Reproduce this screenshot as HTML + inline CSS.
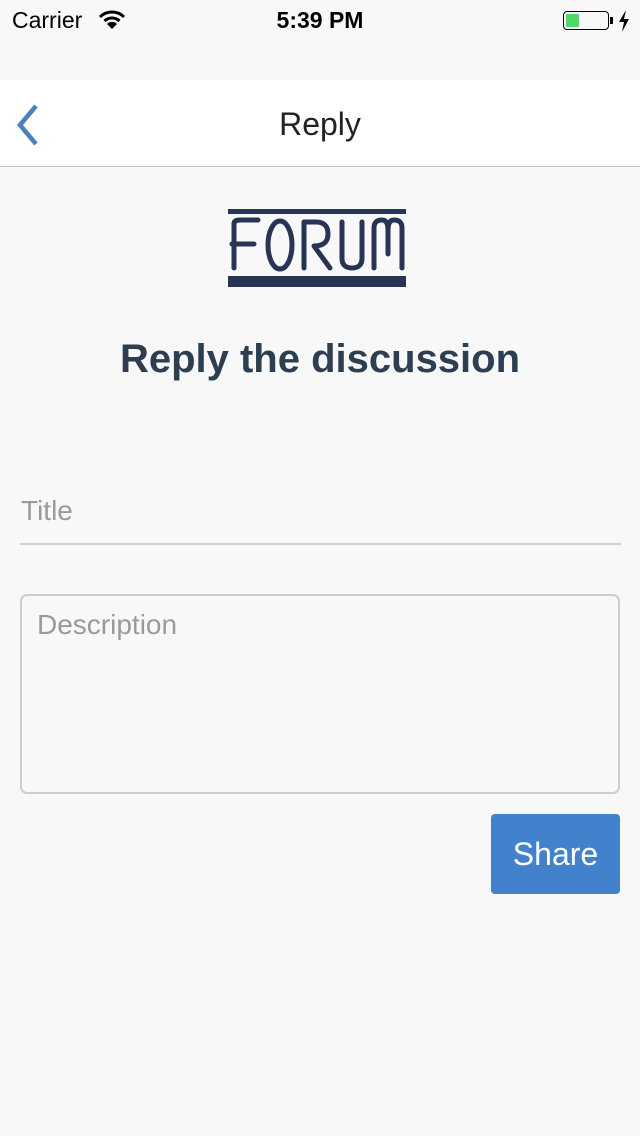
<!DOCTYPE html>
<html><head><meta charset="utf-8"><style>
*{margin:0;padding:0;box-sizing:border-box}
body{width:640px;height:1136px;background:#f8f8f8;font-family:"Liberation Sans",sans-serif;position:relative;overflow:hidden}
.abs{position:absolute}
</style></head><body>
<div class="abs" style="left:12px;top:7px;font-size:23px;color:#000">Carrier</div>
<svg class="abs" style="left:98px;top:10px" width="28" height="20" viewBox="0 0 28 20"><path d="M2 7 A17 17 0 0 1 26 7" stroke="#000" stroke-width="3" fill="none"/><path d="M6.5 11 A11 11 0 0 1 21.5 11" stroke="#000" stroke-width="3" fill="none"/><path d="M14 19 L9 14 A7 7 0 0 1 19 14 Z" fill="#000"/></svg>
<div class="abs" style="left:0;width:640px;text-align:center;top:7px;font-size:23px;font-weight:bold;color:#000">5:39 PM</div>
<div class="abs" style="left:563px;top:11px;width:46px;height:19px;border:1.5px solid #000;border-radius:4px"></div>
<div class="abs" style="left:566px;top:14px;width:13px;height:13px;background:#4cd964;border-radius:1px"></div>
<div class="abs" style="left:610px;top:17px;width:3px;height:7px;background:#000"></div>
<svg class="abs" style="left:618px;top:10px" width="12" height="22" viewBox="0 0 12 22"><path d="M8 0 L1 12 H6 L4 22 L11 9 H6 Z" fill="#000"/></svg>
<div class="abs" style="left:0;top:80px;width:640px;height:87px;background:#fff;border-bottom:1.5px solid #c8c8c8"></div>
<svg class="abs" style="left:12px;top:104px" width="30" height="42" viewBox="0 0 30 42"><path d="M24 2 L8 21 L24 40" stroke="#4a80c0" stroke-width="4.5" fill="none"/></svg>
<div class="abs" style="left:0;width:640px;text-align:center;top:106px;font-size:32px;color:#222">Reply</div>
<div class="abs" style="left:228px;top:209px;width:178px;height:5px;background:#283456"></div>
<div class="abs" style="left:228px;top:276px;width:178px;height:11px;background:#283456"></div>
<svg class="abs" style="left:228px;top:214px" width="178" height="62" viewBox="0 0 178 62"><g stroke="#283456" stroke-width="5" fill="none" stroke-linecap="round" stroke-linejoin="round">
<path d="M6 54 V10 Q6 6 12 6 H30 M4 30 H26"/>
<ellipse cx="52" cy="31" rx="12" ry="24"/>
<path d="M76 54 V8 H88 Q100 8 100 20 Q100 32 86 32 L102 54"/>
<path d="M114 8 V44 Q114 54 124 54 Q134 54 134 44 V8"/>
<path d="M146 54 V14 Q146 6 154 6 Q160 6 160 16 V40 M160 16 Q160 6 166 6 Q174 6 174 14 V54"/>
</g></svg>
<div class="abs" style="left:0;width:640px;text-align:center;top:337px;font-size:40px;font-weight:bold;color:#2c3e50">Reply the discussion</div>
<div class="abs" style="left:21px;top:495px;font-size:28px;color:#9a9a9a">Title</div>
<div class="abs" style="left:20px;top:543px;width:601px;height:2px;background:#cfcfcf"></div>
<div class="abs" style="left:20px;top:594px;width:600px;height:200px;border:2px solid #cdcdcd;border-radius:7px"></div>
<div class="abs" style="left:37px;top:609px;font-size:28px;color:#9a9a9a">Description</div>
<div class="abs" style="left:491px;top:814px;width:129px;height:80px;background:#4282cc;border-radius:4px;color:#fff;font-size:32px;text-align:center;line-height:80px">Share</div>
</body></html>
